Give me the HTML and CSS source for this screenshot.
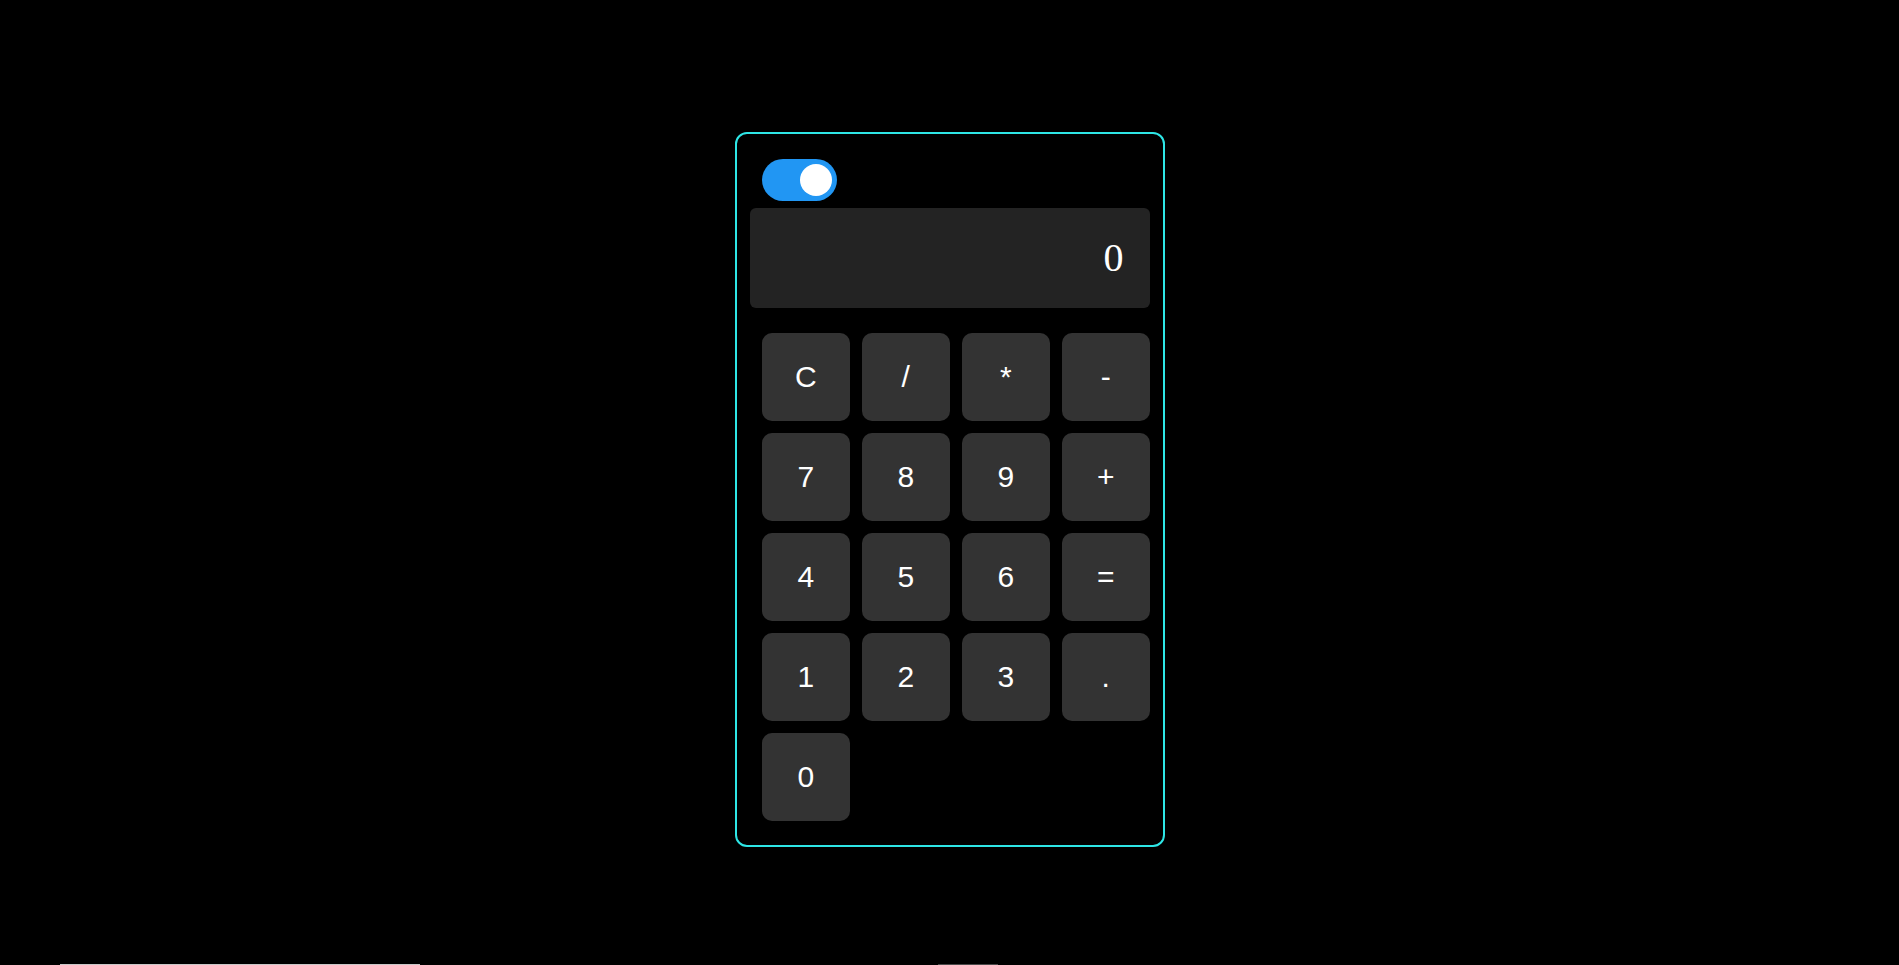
FILE: index.html
```html
<!DOCTYPE html>
<html lang="en">
<head>
<meta charset="utf-8">
<title>Calculator</title>
<link rel="stylesheet" href="styles.css">
</head>
<body>
<div class="calc">
  <div class="toggle"><span class="knob"></span></div>
  <div class="display">0</div>
  <div class="keys">
    <button class="key">C</button>
    <button class="key">/</button>
    <button class="key">*</button>
    <button class="key">-</button>
    <button class="key">7</button>
    <button class="key">8</button>
    <button class="key">9</button>
    <button class="key">+</button>
    <button class="key">4</button>
    <button class="key">5</button>
    <button class="key">6</button>
    <button class="key">=</button>
    <button class="key">1</button>
    <button class="key">2</button>
    <button class="key">3</button>
    <button class="key">.</button>
    <button class="key">0</button>
  </div>
</div>
<div class="footer">
  <span class="bar bar-light"></span>
  <span class="bar bar-dim"></span>
</div>
</body>
</html>
```
FILE: styles.css
```css
html, body {
  margin: 0;
  padding: 0;
  background: #000;
}
body {
  font-family: "Liberation Sans", Arial, sans-serif;
}
.calc {
  box-sizing: border-box;
  width: 430px;
  margin: 132px auto 0;
  border: 2px solid #2ee6e6;
  border-radius: 12px;
  padding: 24.5px 13px 24.2px;
  display: flex;
  flex-direction: column;
}
.toggle {
  margin-left: 12.5px;
  width: 75px;
  height: 42.5px;
  border-radius: 21.25px;
  background: #2196f3;
  display: flex;
  justify-content: flex-end;
  align-items: center;
  padding-right: 5px;
  box-sizing: border-box;
}
.knob {
  width: 32.5px;
  height: 32.5px;
  border-radius: 50%;
  background: #fff;
}
.display {
  margin-top: 6.7px;
  height: 100px;
  background: #232323;
  border-radius: 6px;
  display: flex;
  align-items: center;
  justify-content: flex-end;
  padding-right: 26px;
  box-sizing: border-box;
  color: #fff;
  font-family: "Liberation Serif", "Times New Roman", serif;
  font-size: 40px;
}
.keys {
  margin-top: 25.6px;
  padding-left: 12.5px;
  display: grid;
  grid-template-columns: repeat(4, 87.5px);
  grid-auto-rows: 87.5px;
  gap: 12.5px;
}
.key {
  border: none;
  margin: 0;
  padding: 0;
  background: #333;
  border-radius: 10px;
  color: #fff;
  font-family: "Liberation Sans", Arial, sans-serif;
  font-size: 30px;
  display: flex;
  align-items: center;
  justify-content: center;
}
.footer {
  margin-top: 117px;
  height: 1px;
  display: flex;
}
.bar {
  height: 1px;
  display: block;
}
.bar-light {
  margin-left: 60px;
  width: 360px;
  background: #c8c8c8;
}
.bar-dim {
  margin-left: 518px;
  width: 60px;
  background: #4a4a4a;
}
```
